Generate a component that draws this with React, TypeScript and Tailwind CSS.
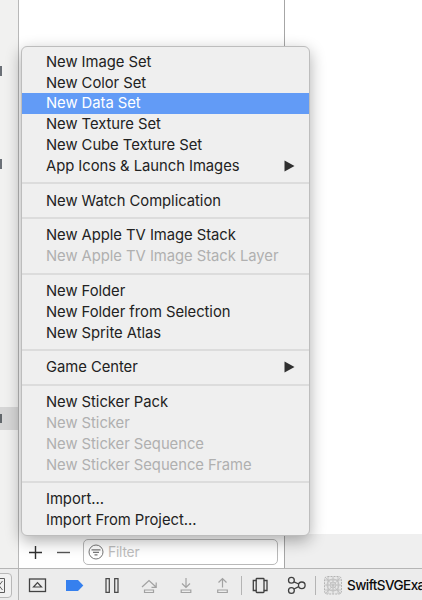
import React from "react";

type Item = { label: string; disabled?: boolean; active?: boolean; submenu?: boolean };

const groups: Item[][] = [
  [
    { label: "New Image Set" },
    { label: "New Color Set" },
    { label: "New Data Set", active: true },
    { label: "New Texture Set" },
    { label: "New Cube Texture Set" },
    { label: "App Icons & Launch Images", submenu: true },
  ],
  [{ label: "New Watch Complication" }],
  [{ label: "New Apple TV Image Stack" }, { label: "New Apple TV Image Stack Layer", disabled: true }],
  [{ label: "New Folder" }, { label: "New Folder from Selection" }, { label: "New Sprite Atlas" }],
  [{ label: "Game Center", submenu: true }],
  [
    { label: "New Sticker Pack" },
    { label: "New Sticker", disabled: true },
    { label: "New Sticker Sequence", disabled: true },
    { label: "New Sticker Sequence Frame", disabled: true },
  ],
  [{ label: "Import..." }, { label: "Import From Project..." }],
];

function MenuItem({ item }: { item: Item }) {
  const tone = item.active ? "bg-[#629bf6] text-white" : item.disabled ? "text-[#b0b0b0]" : "text-[#222222]";
  return (
    <div className={`flex h-[20.83px] items-center justify-between pl-[24px] pr-[14px] ${tone}`}>
      <span className="whitespace-nowrap">{item.label}</span>
      {item.submenu && (
        <svg width="11" height="12" viewBox="0 0 11 12">
          <path d="M0.5 0.5V11.5L10.5 6Z" fill="#303030" />
        </svg>
      )}
    </div>
  );
}

function Menu() {
  return (
    <div className="absolute left-[21px] top-[46px] h-[490px] w-[289px] rounded-[6px] border border-[#bdbdbd] bg-[#efefef] pt-[4.4px] text-[14.8px] leading-[20px] tracking-[-0.04px] shadow-[0_5px_16px_rgba(0,0,0,0.32)]">
      {groups.map((group, i) => (
        <React.Fragment key={i}>
          {i > 0 && (
            <div className="flex h-[13.93px] items-center">
              <div className="h-[2px] w-full bg-[#dcdcdc]" />
            </div>
          )}
          {group.map((item) => (
            <MenuItem key={item.label} item={item} />
          ))}
        </React.Fragment>
      ))}
    </div>
  );
}

function Toolbar() {
  return (
    <div className="flex h-[32px] shrink-0 items-center border-t border-[#b5b5b5] bg-[#ececec]">
      <svg width="342" height="31" viewBox="0 569 342 31" fill="none" className="shrink-0">
        <path d="M-4 573.5H8Q11.5 573.5 11.5 577V594Q11.5 597.5 8 597.5H-4" stroke="#b8b8b8" fill="#f1f1f1" />
        <path d="M-3 578.5H4.5V592.5H-3M2.5 581L-1 585.5L2.5 590" stroke="#5c5c5c" />
        <path d="M18.5 569V600" stroke="#b5b5b5" />
        <rect x="29.5" y="579" width="16" height="12.5" stroke="#424242" strokeWidth="1.3" />
        <path d="M33.5 587L37.5 582.7L41.5 587Z" stroke="#424242" strokeWidth="1.2" />
        <path d="M66 580H78L83.3 585.5L78 591H66Z" fill="#3680ee" />
        <path d="M106 578.7H109.3V592.3H106ZM114.7 578.7H118V592.3H114.7Z" stroke="#494949" strokeWidth="1.25" />
        <g stroke="#a2a2a2" strokeWidth="1.2">
          <path d="M142 587L149 580.5L156 587M156.2 582.5V587.3H151.5M144.5 590H153.5V592.5H144.5Z" />
          <path d="M186 578V587M182 583.5L186 587.5L190 583.5M181.2 590H190.8V592.5H181.2Z" />
          <path d="M222.5 587.5V578.5M218.5 582.5L222.5 578.5L226.5 582.5M217.7 590H227.3V592.5H217.7Z" />
        </g>
        <path d="M241.5 576V595M315.5 576V595" stroke="#b4b4b4" />
        <g stroke="#404040" strokeWidth="1.3">
          <path d="M256.5 580.5H253.3V590.5H256.5M263.7 580.5H267V590.5H263.7" />
          <rect x="256.2" y="578.5" width="7.8" height="14" rx="0.7" />
          <circle cx="291.4" cy="580.3" r="2.9" />
          <circle cx="291.4" cy="590.5" r="2.9" />
          <circle cx="301.8" cy="585.3" r="3.3" />
          <path d="M294 581.8L298.7 584M294 589L298.7 586.6" />
        </g>
        <rect x="324.5" y="576.5" width="17" height="17.5" rx="3" fill="#e7e7e7" stroke="#b4b4b4" strokeDasharray="2 1" />
        <g stroke="#bcbcbc" strokeWidth="0.8">
          <path d="M328 577V594M333 577V594M338 577V594M325 580H341M325 585H341M325 590H341M325 577L341 594M341 577L325 594" />
          <circle cx="333" cy="585" r="6" />
          <circle cx="333" cy="585" r="3" />
        </g>
      </svg>
      <span className="ml-[5px] whitespace-nowrap text-[13.5px] font-medium leading-[20px] tracking-[-0.55px] text-[#0c0c0c]">SwiftSVGExa</span>
    </div>
  );
}

export default function App() {
  return (
    <div className="relative flex h-[600px] w-[422px] flex-col overflow-hidden bg-white font-['Inter','Liberation_Sans',sans-serif]">
      <div className="flex min-h-0 flex-1">
        <div className="flex w-[19px] flex-col border-r border-[#b8b8b8] bg-[#f1f1f0]">
          <div className="mt-[66px] h-[10px] w-[2px] bg-[#6b7077]" />
          <div className="mt-[83px] h-[10px] w-[2px] bg-[#6b7077]" />
          <div className="mt-[238px] flex h-[23px] items-center bg-[#d6d6d6]">
            <div className="h-[9px] w-[2px] bg-[#62676b]" />
          </div>
        </div>
        <div className="flex w-[266px] flex-col justify-end border-r border-[#a6a6a6] bg-white">
          <div className="flex h-[34px] items-center">
            <svg width="64" height="34" viewBox="19 534 64 34" stroke="#303030" strokeWidth="1.4">
              <path d="M29 552.5H42M35.5 546V559" />
              <path d="M57 552.5H70" stroke="#555555" />
            </svg>
            <div className="mt-px flex h-[26px] w-[195px] items-center rounded-[5px] border border-[#b9b9b9] bg-white pl-[4px]">
              <svg width="16" height="16" viewBox="0 0 16 16" fill="none" stroke="#777777">
                <circle cx="8" cy="8" r="7" />
                <path d="M3.5 5.8H12.5M5 8.3H11M6.5 10.8H9.5" strokeWidth="1.2" />
              </svg>
              <span className="ml-[4px] text-[13.8px] leading-[20px] tracking-[-0.2px] text-[#bebebe]">Filter</span>
            </div>
          </div>
        </div>
        <div className="flex flex-1 flex-col justify-end">
          <div className="h-[34px] bg-[#efefef]" />
        </div>
      </div>
      <Toolbar />
      <Menu />
    </div>
  );
}
